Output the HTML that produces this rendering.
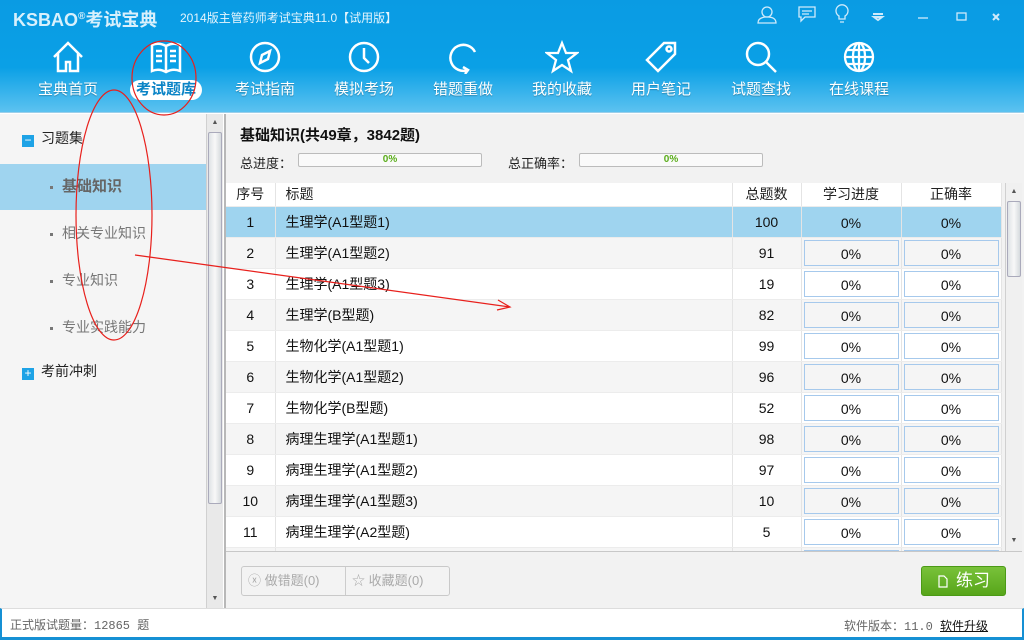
<!DOCTYPE html>
<html><head><meta charset="utf-8">
<style>
*{margin:0;padding:0;box-sizing:border-box}
body{width:1024px;height:640px;overflow:hidden;font-family:"Liberation Sans","Noto Sans CJK SC",sans-serif;background:#fff;position:relative}
.abs{position:absolute}
#hdr{left:0;top:0;width:1024px;height:113px;background:linear-gradient(#0a9be3 0%,#0aa0e6 60%,#5cc2f0 100%);border-bottom:1px solid #9ccfea}
.nav{position:absolute;top:40px;width:90px;text-align:center;color:#fff;font-size:15px}
.nav svg{display:block;margin:0 auto 6px}
.nav span{display:inline-block;padding:0 6px;line-height:20px;text-shadow:0 1px 1px rgba(0,0,0,.25)}
.nav span.act{background:#fff;color:#0b84c6;border-radius:10px;font-weight:bold;text-shadow:none}
#left{left:0;top:114px;width:206px;height:494px;background:#f5f5f5}
.vs{background:#e9e9e9;border-left:1px solid #d0d0d0}
.tree1{position:absolute;left:22px;font-size:14px;color:#222}
.box{display:inline-block;width:12px;height:12px;background:#1ea3e6;color:#fff;font-size:12px;line-height:11px;text-align:center;margin-right:7px;vertical-align:-1px}
.tree2{position:absolute;left:0;width:206px;height:46px;line-height:46px;padding-left:50px;font-size:14px;color:#777}
.tree2 b{display:inline-block;width:3px;height:3px;background:#777;vertical-align:middle;margin-right:9px}
#main{left:224px;top:114px;width:800px;height:494px;background:#f2f2f2;border-left:2px solid #b8b8b8}
table{border-collapse:collapse;position:absolute;left:226px;top:183px;font-size:14px;color:#111}
td{height:31px;text-align:center;border-right:1px solid #e4e4e4;border-bottom:1px solid #ececec;padding:0}
tr.h td{height:23px;background:#fff;color:#222}
tr.g td{background:#f5f5f5}
tr.w td{background:#fff}
tr.s td{background:#9fd4ef}
td.t{text-align:left;padding-left:10px}
.pc{display:block;margin:0 2px;height:26px;line-height:26px;border:1px solid #a6c9ec;background:#fff}
tr.g .pc{background:#f5f5f5}
tr.s .pc{background:#9fd4ef;border-color:#9fd4ef}
.bar{position:absolute;height:14px;border:1px solid #bcbcbc;border-radius:2px;background:#fafafa;font-size:10px;font-weight:bold;color:#5aad1a;text-align:center;line-height:12px}
</style></head><body>
<div id="hdr" class="abs">
 <div class="abs" style="left:13px;top:6px;color:#d8f0fc;font-weight:bold;font-size:18px;letter-spacing:0">KSBAO<sup style="font-size:10px">®</sup>考试宝典</div>
 <div class="abs" style="left:180px;top:9px;color:#e6f5fd;font-size:12px">2014版主管药师考试宝典11.0【试用版】</div>
 <svg class="abs" style="left:755px;top:4px" width="260" height="22" fill="none" stroke="#cfeafb" stroke-width="1.3">
  <circle cx="12" cy="8" r="5"/><path d="M3 19 q0-6 9-6 q9 0 9 6z"/>
  <path d="M44 3h16v10h-10l-4 4v-4h-2z M47 7h10 M47 10h7"/>
  <path d="M84 12a6 6 0 1 1 6 0v3h-6z M85 18h4"/>
  <path d="M118 10h10 M119 13h8 l-4 3z" stroke-width="2"/>
  <path d="M163 14h10"/>
  <rect x="202" y="9" width="9" height="7"/>
  <path d="M238 10l6 6 M244 10l-6 6" stroke-width="2"/>
 </svg>
</div>
<div class="nav" style="left:23px"><svg width="34" height="34" fill="none" stroke="#fff" stroke-width="2.5"><path d="M3 17L17 3l14 14 M7 13v18h8v-9h4v9h8V13"/></svg><span>宝典首页</span></div>
<div class="nav" style="left:121px"><svg width="34" height="34" fill="none" stroke="#fff" stroke-width="2.5"><path d="M3 5q7-3 14 1q7-4 14-1v26q-7-3-14 1q-7-4-14-1z M17 6v26 M7 11h6M7 16h6M7 21h6M21 11h6M21 16h6M21 21h6"/></svg><span class="act">考试题库</span></div>
<div class="nav" style="left:220px"><svg width="34" height="34" fill="none" stroke="#fff" stroke-width="2.5"><circle cx="17" cy="17" r="14"/><path d="M22 11l-8 4-2 8 8-4z"/></svg><span>考试指南</span></div>
<div class="nav" style="left:319px"><svg width="34" height="34" fill="none" stroke="#fff" stroke-width="2.5"><circle cx="17" cy="17" r="14"/><path d="M17 8v10l5 5"/></svg><span>模拟考场</span></div>
<div class="nav" style="left:418px"><svg width="34" height="34" fill="none" stroke="#fff" stroke-width="2.5"><path d="M22 30A13 13 0 1 1 29 12 M17 27l5 3-3 4"/></svg><span>错题重做</span></div>
<div class="nav" style="left:517px"><svg width="34" height="34" fill="none" stroke="#fff" stroke-width="2.3"><path d="M17 3l4 10h11l-9 7 3 11-9-6-9 6 3-11-9-7h11z"/></svg><span>我的收藏</span></div>
<div class="nav" style="left:616px"><svg width="34" height="34" fill="none" stroke="#fff" stroke-width="2.5"><path d="M20 3h11v11L14 31 3 20z"/><circle cx="25" cy="9" r="2.5"/></svg><span>用户笔记</span></div>
<div class="nav" style="left:716px"><svg width="34" height="34" fill="none" stroke="#fff" stroke-width="2.5"><circle cx="14" cy="14" r="11"/><path d="M22 22l10 10"/></svg><span>试题查找</span></div>
<div class="nav" style="left:814px"><svg width="34" height="34" fill="none" stroke="#fff" stroke-width="2.3"><circle cx="17" cy="17" r="14"/><ellipse cx="17" cy="17" rx="6" ry="14"/><path d="M17 3v28M3 17h28M5 10h24M5 24h24"/></svg><span>在线课程</span></div>

<div id="left" class="abs">
 <div class="tree1" style="top:14px"><span class="box">−</span>习题集</div>
 <div class="tree2" style="top:50px;background:#9fd4ef;color:#666;font-weight:bold;font-size:15px"><b></b>基础知识</div>
 <div class="tree2" style="top:96px"><b></b>相关专业知识</div>
 <div class="tree2" style="top:143px"><b></b>专业知识</div>
 <div class="tree2" style="top:190px"><b></b>专业实践能力</div>
 <div class="tree1" style="top:247px"><span class="box">+</span>考前冲刺</div>
</div>
<div class="abs vs" style="left:206px;top:114px;width:17px;height:494px">
 <div class="abs" style="left:0;top:2px;width:16px;height:14px;font-size:7px;color:#555;text-align:center;line-height:14px">▲</div>
 <div class="abs" style="left:1px;top:18px;width:14px;height:372px;background:linear-gradient(90deg,#dfe3e6,#f8f8f8,#d5dadd);border:1px solid #aab;border-radius:2px"></div>
 <div class="abs" style="left:0;top:478px;width:16px;height:14px;font-size:7px;color:#555;text-align:center;line-height:14px">▼</div>
</div>
<div id="main" class="abs"></div>
<div class="abs" style="left:240px;top:124px;font-size:15px;font-weight:bold;color:#111">基础知识(共49章，3842题)</div>
<div class="abs" style="left:240px;top:153px;font-size:13px;color:#222">总进度：</div>
<div class="bar" style="left:298px;top:153px;width:184px">0%</div>
<div class="abs" style="left:508px;top:153px;font-size:13px;color:#222">总正确率：</div>
<div class="bar" style="left:579px;top:153px;width:184px">0%</div>
<table>
<colgroup><col style="width:49px"><col style="width:457px"><col style="width:69px"><col style="width:100px"><col style="width:100px"></colgroup>
<tr class="h"><td>序号</td><td class="t">标题</td><td>总题数</td><td>学习进度</td><td>正确率</td></tr>
<tr class="s"><td>1</td><td class="t">生理学(A1型题1)</td><td>100</td><td><span class="pc">0%</span></td><td><span class="pc">0%</span></td></tr>
<tr class="g"><td>2</td><td class="t">生理学(A1型题2)</td><td>91</td><td><span class="pc">0%</span></td><td><span class="pc">0%</span></td></tr>
<tr class="w"><td>3</td><td class="t">生理学(A1型题3)</td><td>19</td><td><span class="pc">0%</span></td><td><span class="pc">0%</span></td></tr>
<tr class="g"><td>4</td><td class="t">生理学(B型题)</td><td>82</td><td><span class="pc">0%</span></td><td><span class="pc">0%</span></td></tr>
<tr class="w"><td>5</td><td class="t">生物化学(A1型题1)</td><td>99</td><td><span class="pc">0%</span></td><td><span class="pc">0%</span></td></tr>
<tr class="g"><td>6</td><td class="t">生物化学(A1型题2)</td><td>96</td><td><span class="pc">0%</span></td><td><span class="pc">0%</span></td></tr>
<tr class="w"><td>7</td><td class="t">生物化学(B型题)</td><td>52</td><td><span class="pc">0%</span></td><td><span class="pc">0%</span></td></tr>
<tr class="g"><td>8</td><td class="t">病理生理学(A1型题1)</td><td>98</td><td><span class="pc">0%</span></td><td><span class="pc">0%</span></td></tr>
<tr class="w"><td>9</td><td class="t">病理生理学(A1型题2)</td><td>97</td><td><span class="pc">0%</span></td><td><span class="pc">0%</span></td></tr>
<tr class="g"><td>10</td><td class="t">病理生理学(A1型题3)</td><td>10</td><td><span class="pc">0%</span></td><td><span class="pc">0%</span></td></tr>
<tr class="w"><td>11</td><td class="t">病理生理学(A2型题)</td><td>5</td><td><span class="pc">0%</span></td><td><span class="pc">0%</span></td></tr>
<tr class="g"><td></td><td></td><td></td><td><span class="pc"></span></td><td><span class="pc"></span></td></tr>
</table>
<div class="abs vs" style="left:1005px;top:183px;width:17px;height:368px;background:#f0f0f0">
 <div class="abs" style="left:0;top:2px;width:16px;height:14px;font-size:7px;color:#555;text-align:center;line-height:14px">▲</div>
 <div class="abs" style="left:1px;top:18px;width:14px;height:76px;background:linear-gradient(90deg,#dfe3e6,#f8f8f8,#d5dadd);border:1px solid #aab;border-radius:2px"></div>
 <div class="abs" style="left:0;top:351px;width:16px;height:14px;font-size:7px;color:#555;text-align:center;line-height:14px">▼</div>
</div>
<div class="abs" style="left:226px;top:551px;width:796px;height:57px;background:#f2f2f2;border-top:1px solid #c8c8c8"></div>
<div class="abs" style="left:241px;top:566px;width:209px;height:30px;border:1px solid #c9c9c9;border-radius:3px;background:#f3f3f3;font-size:13px;color:#aaa;line-height:28px">
 <span class="abs" style="left:6px">ⓧ 做错题(0)</span><span class="abs" style="left:103px;top:0;width:1px;height:28px;background:#ccc"></span><span class="abs" style="left:110px">☆ 收藏题(0)</span>
</div>
<div class="abs" style="left:921px;top:566px;width:85px;height:30px;border-radius:3px;background:linear-gradient(#79c23a,#57a51a);border:1px solid #4b9a16;color:#fff;font-size:17px;line-height:28px">
 <svg class="abs" style="left:16px;top:8px" width="10" height="13" fill="none" stroke="#fff" stroke-width="1.2"><path d="M1 1h5l3 3v8H1z"/></svg>
 <span class="abs" style="left:34px;top:0">练习</span>
</div>
<div class="abs" style="left:0;top:608px;width:1024px;height:32px;background:#fff;border-top:1px solid #ddd;border-bottom:3px solid #1590d4;border-left:2px solid #1590d4;border-right:2px solid #1590d4"></div>
<div class="abs" style="left:10px;top:616px;font-size:12px;color:#666;font-family:'Liberation Mono','Noto Sans CJK SC',monospace">正式版试题量：12865 题</div>
<div class="abs" style="left:844px;top:617px;font-size:12px;color:#666;font-family:'Liberation Mono','Noto Sans CJK SC',monospace">软件版本：11.0 <u style="color:#111">软件升级</u></div>
<svg class="abs" style="left:0;top:0" width="1024" height="640" fill="none" stroke="#e8201c" stroke-width="1.2">
 <ellipse cx="164" cy="78" rx="32" ry="37"/>
 <ellipse cx="114" cy="215" rx="38" ry="125"/>
 <path d="M135 255L510 307 M498 300l12 7-13 3" />
</svg>
</body></html>
